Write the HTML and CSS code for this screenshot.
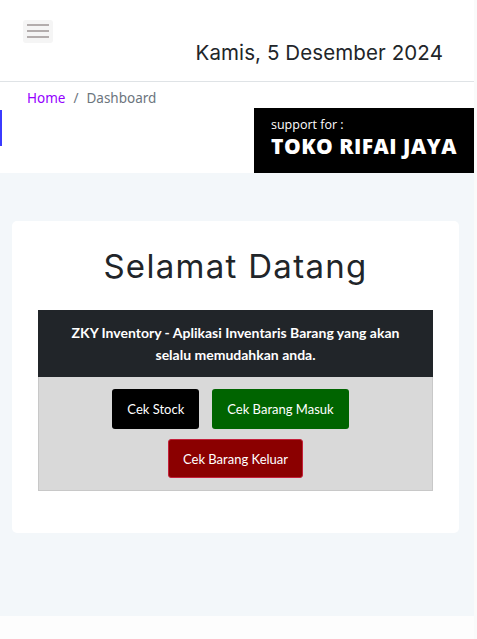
FILE: index.html
```html
<!DOCTYPE html>
<html lang="id">
<head>
<meta charset="utf-8">
<title>Dashboard - ZKY Inventory</title>
<link rel="stylesheet" href="styles.css">
</head>
<body>
<div class="page">
  <header class="topbar">
    <button class="burger" aria-label="menu"><span></span><span></span><span></span></button>
    <div class="date">Kamis, 5 Desember 2024</div>
  </header>
  <div class="sub">
    <nav class="crumbs"><a href="#" class="crumb-link">Home</a><span class="sep">/</span><span class="crumb-cur">Dashboard</span></nav>
    <div class="subrow">
      <div class="accent"></div>
      <div class="logo">
        <div class="logo-small">support for :</div>
        <div class="logo-big">TOKO RIFAI JAYA</div>
      </div>
    </div>
  </div>
  <main class="content">
    <section class="card">
      <h1 class="title">Selamat Datang</h1>
      <div class="info">ZKY Inventory - Aplikasi Inventaris Barang yang akan selalu memudahkan anda.</div>
      <div class="actions">
        <div class="row row-top">
          <a href="#" class="btn btn-black">Cek Stock</a>
          <a href="#" class="btn btn-green">Cek Barang Masuk</a>
        </div>
        <div class="row">
          <a href="#" class="btn btn-red">Cek Barang Keluar</a>
        </div>
      </div>
    </section>
  </main>
  <footer class="foot"></footer>
</div>
</body>
</html>
```
FILE: styles.css
```css
* { box-sizing: border-box; }
html, body { margin: 0; padding: 0; }
body { background: #fafafa; font-family: "Noto Sans", sans-serif; }
.page { width: 474px; background: #fff; }

.topbar {
  height: 82px;
  border-bottom: 1px solid #dfe3e6;
  padding: 20px 31px 0 23px;
  display: flex;
  flex-direction: column;
}
.burger {
  width: 30px; height: 23px;
  background: #f5f5f5;
  border: none; border-radius: 3px;
  padding: 4px 4px 0 4px;
  display: flex; flex-direction: column; gap: 3.5px;
  align-items: stretch;
}
.burger span { display: block; height: 2.4px; background: #b3adad; }
.date {
  align-self: flex-end;
  font-family: "Inter", "DejaVu Sans", sans-serif;
  font-size: 20.5px;
  line-height: 20px;
  color: #212529;
  letter-spacing: 0.1px;
}

.crumbs {
  padding: 6px 0 0 27px;
  font-family: "Noto Sans", sans-serif;
  font-size: 13.5px;
  line-height: 20px;
  display: flex;
}
.crumb-link { color: #9400ff; text-decoration: none; }
.sep { color: #6c757d; padding: 0 8px; }
.crumb-cur { color: #6c757d; }
.subrow { display: flex; justify-content: space-between; align-items: flex-start; }
.accent { width: 1.5px; height: 36px; margin-top: 2px; background: #3b3bff; }
.logo {
  width: 220px; height: 65px;
  background: #000; color: #fff;
  padding: 9px 0 0 17px;
}
.logo-small { font-family: "Open Sans", sans-serif; font-size: 12.5px; line-height: 16px; }
.logo-big { font-family: "Open Sans", sans-serif; font-weight: 800; font-size: 21px; line-height: 22px; margin-top: 2px; letter-spacing: 0.5px; }

.content { background: #f3f7fa; padding: 48px 15px 83px 12px; }
.card {
  background: #fff;
  border-radius: 5px;
  padding: 26px 26px 42px;
}
.title {
  margin: 0 0 25px;
  text-align: center;
  font-family: "Inter", "DejaVu Sans", sans-serif;
  font-weight: 400;
  font-size: 33px;
  line-height: 38px;
  letter-spacing: 1.3px;
  color: #212529;
}
.info {
  background: #212529;
  color: #fff;
  text-align: center;
  font-family: "Lato", sans-serif;
  font-weight: 700;
  font-size: 14px;
  line-height: 22px;
  padding: 12px 30px 11px;
}
.actions {
  background: #d9d9d9;
  border: 1px solid #c8c8c8;
  border-top: none;
  padding: 12px 0;
  display: flex; flex-direction: column; gap: 10px;
}
.row { display: flex; justify-content: center; gap: 13px; }
.row-top { padding-right: 10px; }
.btn {
  display: flex; align-items: center; justify-content: center;
  height: 40px;
  padding: 0 15px;
  border-radius: 3px;
  color: #fff;
  text-decoration: none;
  font-family: "Lato", sans-serif;
  font-size: 13px;
}
.btn-black { background: #000; }
.btn-green { background: #006400; }
.btn-red { background: #8b0000; border: 1px solid #c4203a; height: 39px; padding: 0 14px; }

.foot { height: 23px; background: #fdfdfd; }
```
